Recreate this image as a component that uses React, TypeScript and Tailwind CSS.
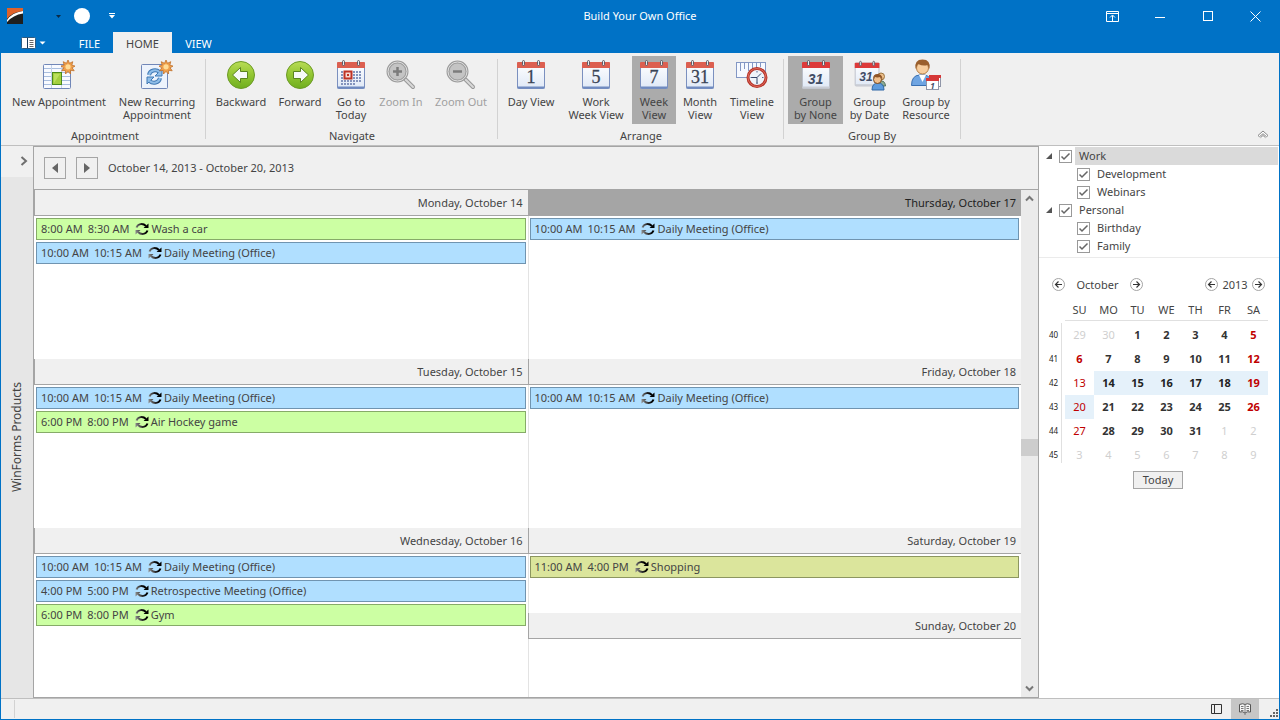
import React, { useState } from 'react';

interface Appointment {
  start: string;
  end: string;
  subject: string;
  color: 'green' | 'blue' | 'olive';
}

interface Day {
  label: string;
  appointments: Appointment[];
}

const dailyMeeting: Appointment = { start: '10:00 AM', end: '10:15 AM', subject: 'Daily Meeting (Office)', color: 'blue' };

const leftDays: Day[] = [
  {
    label: 'Monday, October 14',
    appointments: [{ start: '8:00 AM', end: '8:30 AM', subject: 'Wash a car', color: 'green' }, dailyMeeting],
  },
  {
    label: 'Tuesday, October 15',
    appointments: [dailyMeeting, { start: '6:00 PM', end: '8:00 PM', subject: 'Air Hockey game', color: 'green' }],
  },
  {
    label: 'Wednesday, October 16',
    appointments: [
      dailyMeeting,
      { start: '4:00 PM', end: '5:00 PM', subject: 'Retrospective Meeting (Office)', color: 'blue' },
      { start: '6:00 PM', end: '8:00 PM', subject: 'Gym', color: 'green' },
    ],
  },
];

const thursday: Day = { label: 'Thursday, October 17', appointments: [dailyMeeting] };
const friday: Day = { label: 'Friday, October 18', appointments: [dailyMeeting] };
const saturday: Day = {
  label: 'Saturday, October 19',
  appointments: [{ start: '11:00 AM', end: '4:00 PM', subject: 'Shopping', color: 'olive' }],
};
const sunday: Day = { label: 'Sunday, October 20', appointments: [] };

const colorClasses = {
  green: 'bg-[#ccffa3] border-[#86ab68]',
  blue: 'bg-[#b0dfff] border-[#7094b0]',
  olive: 'bg-[#dbe59c] border-[#8c9660]',
};

const weekDays = ['SU', 'MO', 'TU', 'WE', 'TH', 'FR', 'SA'];

const weeks = [
  { week: 40, days: [29, 30, 1, 2, 3, 4, 5] },
  { week: 41, days: [6, 7, 8, 9, 10, 11, 12] },
  { week: 42, days: [13, 14, 15, 16, 17, 18, 19] },
  { week: 43, days: [20, 21, 22, 23, 24, 25, 26] },
  { week: 44, days: [27, 28, 29, 30, 31, 1, 2] },
  { week: 45, days: [3, 4, 5, 6, 7, 8, 9] },
];

/* ---------- ribbon icons ---------- */

const Star = () => (
  <g transform="translate(0 1)">
    <path
      d="M25 0l1.5 3.3 3.3-1.6-1 3.5 3.2.9-2.9 1.7 2.1 3-3.6-.5-.1 3.7-2.5-2.6-2.5 2.6-.2-3.6-3.5.4 2-3L18 6.1l3.2-.9-1-3.5 3.3 1.6z"
      fill="#f0a04c"
      stroke="#c0702a"
      strokeWidth=".8"
    />
    <circle cx="25" cy="6.8" r="2.6" fill="#ffdc96" />
  </g>
);

const NewAppointmentIcon = () => (
  <svg width="32" height="32" viewBox="0 0 32 32">
    <g transform="translate(-1 0)">
      <rect x="1.5" y="5.5" width="27" height="24" rx="1" fill="#f8faff" stroke="#7187b8" />
      <path d="M2 9.5h26M2 13.5h26M2 17.5h26M2 21.5h26M2 25.5h26" stroke="#a9bede" />
      <path d="M9.5 6v23M19.5 6v23" stroke="#c3d2ea" />
      <rect x="10.5" y="13.5" width="9" height="12" fill="#a3cf3e" stroke="#4c8a1b" />
      <path d="M12 24v-9h6z" fill="#bbe05c" />
    </g>
    <Star />
  </svg>
);

const NewRecurringIcon = () => (
  <svg width="32" height="32" viewBox="0 0 32 32">
    <g transform="translate(-1 0)">
      <rect x="1.5" y="5.5" width="26" height="24" rx="1" fill="#edf3fc" stroke="#7187b8" />
      <g fill="none" stroke="#3f78b4" strokeWidth="4">
        <path d="M9 16c1-5 7-6 10.5-3" />
        <path d="M20 19c-1 5-7 6-10.5 3" />
      </g>
      <path d="M22 10v7h-7zM7 25v-7h7z" fill="#8fbde8" stroke="#3f78b4" />
      <g fill="none" stroke="#8fbde8" strokeWidth="2">
        <path d="M9 16c1-5 7-6 10.5-3" />
        <path d="M20 19c-1 5-7 6-10.5 3" />
      </g>
    </g>
    <Star />
  </svg>
);

const ArrowCircleIcon = ({ back }: { back?: boolean }) => (
  <svg width="32" height="32" viewBox="0 0 32 32">
    <defs>
      <linearGradient id="greenBall" x1="0" y1="0" x2="0" y2="1">
        <stop offset="0" stopColor="#b9dc55" />
        <stop offset=".5" stopColor="#92c632" />
        <stop offset="1" stopColor="#6fae1f" />
      </linearGradient>
    </defs>
    <circle cx="16" cy="16" r="13.5" fill="url(#greenBall)" stroke="#6c9a26" />
    <path
      d={back ? 'M7.5 16l8-7.5v4h7v7h-7v4z' : 'M24.5 16l-8-7.5v4h-7v7h7v4z'}
      fill="#f6faf8"
      stroke="#5a851f"
    />
  </svg>
);

const CalendarBase = ({ bright }: { bright?: boolean }) => (
  <g>
    <defs>
      <linearGradient id="page" x1="0" y1="0" x2="0" y2="1">
        <stop offset="0" stopColor="#ffffff" />
        <stop offset="1" stopColor="#dfe8f6" />
      </linearGradient>
    </defs>
    <rect x="2.5" y="3.5" width="27" height="26" rx="1" fill="url(#page)" stroke={bright ? '#b9bdc6' : '#7b90bf'} />
    <path d="M2 9V4q0-1 1-1h26q1 0 1 1v5z" fill={bright ? '#dd3a3a' : '#dc5f50'} />
    <path d="M2.5 28.5h27" stroke={bright ? '#c9ccd4' : '#6f8ac0'} strokeWidth="2" />
    <g fill="#e9eaed" stroke="#5c5c66">
      <rect x="7.5" y="1.5" width="2" height="5" rx="1" />
      <rect x="22.5" y="1.5" width="2" height="5" rx="1" />
    </g>
  </g>
);

const CalendarIcon = ({ day }: { day: string }) => (
  <svg width="32" height="32" viewBox="0 0 32 32">
    <CalendarBase />
    <text x="16" y="24" textAnchor="middle" fontSize="18" fontFamily="Liberation Serif, serif" fill="#3a4456" stroke="#3a4456" strokeWidth=".3">
      {day}
    </text>
  </svg>
);

const TodayIcon = () => (
  <svg width="32" height="32" viewBox="0 0 32 32">
    <CalendarBase />
    <path
      d="M6 13h20M6 16h20M6 19h20M6 22h20M6 25h14"
      stroke="#8494bd"
      strokeWidth="2"
      strokeDasharray="2 1"
    />
    <rect x="9.5" y="12.5" width="7" height="7" fill="#f7d9d2" stroke="#bf3325" strokeWidth="2" />
    <rect x="12" y="15" width="2" height="2" fill="#bf3325" />
  </svg>
);

const ZoomIcon = ({ plus }: { plus?: boolean }) => (
  <svg width="32" height="32" viewBox="0 0 32 32">
    <path d="M20.5 20.500l7.500 7.500" stroke="#989898" strokeWidth="4" strokeLinecap="round" />
    <path d="M20.5 20.500l7.500 7.500" stroke="#d8d8d8" strokeWidth="2" strokeLinecap="round" />
    <circle cx="12.5" cy="12.5" r="9.5" fill="#c4c4c4" stroke="#9c9c9c" strokeWidth="3" />
    <circle cx="12.5" cy="12.5" r="9.5" fill="none" stroke="#e0e0e0" />
    <path d={plus ? 'M8 12.5h9M12.500 8v9' : 'M8 12.5h9'} stroke="#7c7c7c" strokeWidth="2.5" />
  </svg>
);

const TimelineIcon = () => (
  <svg width="32" height="32" viewBox="0 0 32 32">
    <rect x="0.5" y="3.5" width="29" height="15" fill="#f6f9ff" stroke="#8397c4" />
    <path d="M4.5 4v8M8.5 4v6M12.5 4v8M16.5 4v6M20.5 4v5M24.5 4v4" stroke="#8397c4" />
    <circle cx="21" cy="18.5" r="9" fill="#eef3fa" stroke="#b5342a" strokeWidth="3" />
    <circle cx="21" cy="18.5" r="9" fill="none" stroke="#e06a5c" />
    <path d="M21 12v1.5M21 23.5V25M14.5 18.5H16M26 18.5h1.5" stroke="#51678f" />
    <path d="M15.5 18.5H21v6M21 18.500l4-4" fill="none" stroke="#35466b" />
  </svg>
);

const GroupNoneIcon = () => (
  <svg width="32" height="32" viewBox="0 0 32 32">
    <CalendarBase bright />
    <text x="15.5" y="25" textAnchor="middle" fontSize="14" fontWeight="700" fontStyle="italic" fontFamily="Liberation Sans, sans-serif" fill="#414c66">
      31
    </text>
  </svg>
);

const GroupDateIcon = () => (
  <svg width="32" height="32" viewBox="0 0 32 32">
    <g transform="translate(-1 1) scale(.88)">
      <CalendarBase bright />
    </g>
    <text x="12" y="22" textAnchor="middle" fontSize="12" fontWeight="700" fontStyle="italic" fontFamily="Liberation Sans, sans-serif" fill="#414c66">
      31
    </text>
    <circle cx="27" cy="17.5" r="3.5" fill="#edc08c" stroke="#9a7440" />
    <path d="M24 27q0-5 3.5-5t4 5z" fill="#8dab93" stroke="#54725f" />
    <path d="M18 31q0-7 6-7t6 7z" fill="#5d9bdd" stroke="#2f67a5" />
    <circle cx="23.5" cy="20.5" r="4" fill="#f0bf8c" stroke="#7a4a20" />
    <path d="M19 20q0-5 4.5-5t5 5l-2-2q-4 1-6-.5z" fill="#8f5527" />
  </svg>
);

const GroupResourceIcon = () => (
  <svg width="32" height="32" viewBox="0 0 32 32">
    <path d="M1.5 26.5q0-10 8-10.5h5q7 1 8 10.500z" fill="#6fa5e2" stroke="#3970b2" />
    <path d="M9 16l3.5 7 3.500-7z" fill="#fff" />
    <circle cx="12.5" cy="9" r="6" fill="#f7cd9d" stroke="#b67d42" />
    <path d="M5.5 10Q4 .5 12.500 .5T19.500 10l-2-4q-4 1.500-9.500-1z" fill="#9a5f2c" />
    <rect x="19.5" y="16.5" width="11" height="11" fill="#fff" stroke="#9096a8" />
    <path d="M19 16h12v3H19z" fill="#d63838" />
    <rect x="16.5" y="19.5" width="12" height="11" fill="#fff" stroke="#9096a8" />
    <path d="M16 19h13v3H16z" fill="#d63838" />
    <text x="22.5" y="30" textAnchor="middle" fontSize="8" fontWeight="700" fontStyle="italic" fontFamily="Noto Sans, sans-serif" fill="#414c66">
      1
    </text>
  </svg>
);

/* ---------- small icons ---------- */

const RecurrenceIcon = () => (
  <svg width="14" height="14" viewBox="0 0 14 14" className="shrink-0">
    <defs>
      <linearGradient id="recurrence" gradientUnits="userSpaceOnUse" x1="0" y1="7" x2="9" y2="5">
        <stop offset="0" stopColor="#8d8d8d" />
        <stop offset="1" stopColor="#000000" />
      </linearGradient>
    </defs>
    <path d="M1.5 5.5C3 1.500 8 1 11 4M12.500 8.500C11 12.500 6 13 3 10" fill="none" stroke="url(#recurrence)" strokeWidth="2" />
    <path d="M13.5 1.500V6H8.500zM.5 12.500V8h5z" fill="url(#recurrence)" />
  </svg>
);

const RoundArrow = ({ label, right }: { label: string; right?: boolean }) => (
  <button aria-label={label} className="block h-[13px] w-[13px]">
    <svg width="13" height="13" viewBox="0 0 13 13">
      <circle cx="6.5" cy="6.5" r="6" fill="#fff" stroke="#a3a3a3" />
      <path
        d={right ? 'M3 6.5h6.500M6.500 3.500l3 3-3 3' : 'M10 6.5H3.500M6.500 3.500l-3 3 3 3'}
        fill="none"
        stroke="#333"
        strokeWidth="1.2"
      />
    </svg>
  </button>
);

/* ---------- ribbon ---------- */

interface RibbonButtonProps {
  icon: React.ReactNode;
  lines: string[];
  width: string;
  active?: boolean;
  disabled?: boolean;
}

const RibbonButton: React.FC<RibbonButtonProps> = ({ icon, lines, width, active, disabled }) => (
  <button
    disabled={disabled}
    className={`flex h-[68px] shrink-0 flex-col items-center pt-[3px] ${width} ${active ? 'bg-[#ababab]' : ''} ${
      disabled ? 'text-[#a0a0a0]' : 'hover:bg-[#d5d5d5]'
    }`}
  >
    {icon}
    <span className="mt-1 block leading-[13px] whitespace-nowrap">
      {lines.map((line) => (
        <span key={line} className="block">
          {line}
        </span>
      ))}
    </span>
  </button>
);

const RibbonGroup: React.FC<{ caption: string; padding: string; children: React.ReactNode }> = ({ caption, padding, children }) => (
  <div className="flex shrink-0">
    <div className={padding}>
      <div className="flex pt-[3px]">{children}</div>
      <div className="pt-1 text-center leading-4">{caption}</div>
    </div>
    <div className="mt-[6px] h-20 w-px bg-[#d2d2d2]" />
  </div>
);

const Ribbon = () => (
  <div className="flex h-[93px] shrink-0 border-b border-[#bfbfbf] bg-[#f0f0f0]">
    <RibbonGroup caption="Appointment" padding="pl-[6px] pr-[2px]">
      <RibbonButton icon={<NewAppointmentIcon />} lines={['New Appointment']} width="w-[104px]" />
      <RibbonButton icon={<NewRecurringIcon />} lines={['New Recurring', 'Appointment']} width="w-[92px]" />
    </RibbonGroup>
    <RibbonGroup caption="Navigate" padding="pl-1 pr-[3px]">
      <RibbonButton icon={<ArrowCircleIcon back />} lines={['Backward']} width="w-[62px]" />
      <RibbonButton icon={<ArrowCircleIcon />} lines={['Forward']} width="w-[56px]" />
      <RibbonButton icon={<TodayIcon />} lines={['Go to', 'Today']} width="w-[46px]" />
      <RibbonButton icon={<ZoomIcon plus />} lines={['Zoom In']} width="w-[54px]" disabled />
      <RibbonButton icon={<ZoomIcon />} lines={['Zoom Out']} width="w-[66px]" disabled />
    </RibbonGroup>
    <RibbonGroup caption="Arrange" padding="pl-1 pr-[3px]">
      <RibbonButton icon={<CalendarIcon day="1" />} lines={['Day View']} width="w-[58px]" />
      <RibbonButton icon={<CalendarIcon day="5" />} lines={['Work', 'Week View']} width="w-[72px]" />
      <RibbonButton icon={<CalendarIcon day="7" />} lines={['Week', 'View']} width="w-[44px]" active />
      <RibbonButton icon={<CalendarIcon day="31" />} lines={['Month', 'View']} width="w-[48px]" />
      <RibbonButton icon={<TimelineIcon />} lines={['Timeline', 'View']} width="w-[56px]" />
    </RibbonGroup>
    <RibbonGroup caption="Group By" padding="px-1">
      <RibbonButton icon={<GroupNoneIcon />} lines={['Group', 'by None']} width="w-[55px]" active />
      <RibbonButton icon={<GroupDateIcon />} lines={['Group', 'by Date']} width="w-[53px]" />
      <RibbonButton icon={<GroupResourceIcon />} lines={['Group by', 'Resource']} width="w-[60px]" />
    </RibbonGroup>
    <button aria-label="Collapse ribbon" className="mr-[10px] mb-[6px] ml-auto self-end">
      <svg width="12" height="9" viewBox="0 0 12 9">
        <path d="M1 5.5l5-4.500 5 4.500-1.500 1.200L6 3.700 2.500 6.700zM3.500 7.700L6 5.500l2.500 2.200" fill="#fff" stroke="#888" />
      </svg>
    </button>
  </div>
);

/* ---------- title bar and tabs ---------- */

const TitleBar = () => (
  <header className="grid h-8 shrink-0 grid-cols-[1fr_auto_1fr] items-center text-white">
    <div className="flex items-center pl-[6px]">
      <svg width="16" height="16" viewBox="0 0 16 16">
        <rect width="16" height="16" fill="#1f1f1f" />
        <path d="M0 0h16v3Q5 4 0 11z" fill="#e0622a" />
        <path d="M0 12Q5 4.5 16 3v2.500Q6 7 0 14z" fill="#fff" />
      </svg>
      <button aria-label="Undo history" className="ml-[33px]">
        <svg width="5" height="3" viewBox="0 0 5 3">
          <path d="M0 0h5L2.5 3z" fill="#0b2a45" />
        </svg>
      </button>
      <button aria-label="Touch mode" className="ml-[13px] h-4 w-4 rounded-full bg-white" />
      <button aria-label="Customize quick access toolbar" className="ml-[19px]">
        <svg width="6" height="6" viewBox="0 0 6 6">
          <path d="M0 0h6v1H0zM0 2h6L3 5.500z" fill="#fff" />
        </svg>
      </button>
    </div>
    <h1>Build Your Own Office</h1>
    <div className="flex justify-end">
      <button aria-label="Ribbon display options" className="flex h-8 w-12 items-center justify-center">
        <svg width="13" height="11" viewBox="0 0 13 11" fill="none" stroke="#fff">
          <path d="M.5 .5h12v10H.5zM0 2.500h13M6.500 10V4.500M4 6.500L6.500 4 9 6.500" />
        </svg>
      </button>
      <button aria-label="Minimize" className="flex h-8 w-12 items-center justify-center">
        <span className="mt-[2px] h-px w-[10px] bg-white" />
      </button>
      <button aria-label="Maximize" className="flex h-8 w-12 items-center justify-center">
        <span className="h-[10px] w-[10px] border border-white" />
      </button>
      <button aria-label="Close" className="flex h-8 w-[47px] items-center justify-center">
        <svg width="11" height="11" viewBox="0 0 11 11" stroke="#fff">
          <path d="M.5 .5l10 10M10.500 .5l-10 10" />
        </svg>
      </button>
    </div>
  </header>
);

const TabStrip = () => (
  <nav className="flex h-[21px] shrink-0 text-white">
    <button aria-label="Application menu" className="mr-5 flex items-center gap-[3px] pl-5">
      <svg width="15" height="12" viewBox="0 0 15 12">
        <rect x=".5" y=".5" width="14" height="11" rx="1" fill="#fff" stroke="#2c5a80" />
        <path d="M6.5 1v10" stroke="#143a5c" />
        <path d="M8.5 3.500h4M8.500 5.500h4M8.500 7.500h4M8.500 9.500h4" stroke="#666" />
      </svg>
      <svg width="7" height="4" viewBox="0 0 7 4">
        <path d="M.5 .5h6L3.500 3.500z" fill="#fff" />
      </svg>
    </button>
    <button className="w-[47px] pt-[3px]">FILE</button>
    <button className="w-[59px] bg-[#f0f0f0] pt-[3px] text-[#444]">HOME</button>
    <button className="w-[53px] pt-[3px]">VIEW</button>
  </nav>
);

/* ---------- scheduler ---------- */

const AppointmentRow: React.FC<{ item: Appointment }> = ({ item }) => (
  <button className={`flex h-[22px] w-full items-center border pl-1 whitespace-nowrap ${colorClasses[item.color]}`}>
    <span>{item.start}</span>
    <span className="ml-[5px]">{item.end}</span>
    <span className="mr-[2px] ml-[6px]">
      <RecurrenceIcon />
    </span>
    <span>{item.subject}</span>
  </button>
);

const DayCell: React.FC<{ day: Day; current?: boolean; divider?: boolean }> = ({ day, current, divider }) => (
  <section className="flex min-h-0 flex-1 flex-col">
    <h2
      className={`h-[26px] shrink-0 border-b border-l border-[#a5a5a5] pr-[5px] text-right leading-[25px] ${
        current ? 'bg-[#a5a5a5] text-[#222]' : 'bg-[#f0f0f0]'
      }`}
    >
      {day.label}
    </h2>
    <div
      className={`flex flex-1 flex-col gap-[2px] border-l bg-white pt-[2px] pr-[2px] pl-px ${
        divider ? 'border-[#e3e3e3]' : 'border-white'
      }`}
    >
      {day.appointments.map((item, i) => (
        <AppointmentRow key={i} item={item} />
      ))}
    </div>
  </section>
);

const Scheduler = () => (
  <main className="flex min-w-0 flex-1 flex-col border border-[#a5a5a5]">
    <div className="flex h-[43px] shrink-0 items-center gap-[10px] border-b border-[#a5a5a5] pl-[10px]">
      <button aria-label="Previous week" className="flex h-[22px] w-[22px] items-center justify-center border border-[#a5a5a5]">
        <svg width="6" height="10" viewBox="0 0 6 10">
          <path d="M6 0v10L0 5z" fill="#666" />
        </svg>
      </button>
      <button aria-label="Next week" className="flex h-[22px] w-[22px] items-center justify-center border border-[#a5a5a5]">
        <svg width="6" height="10" viewBox="0 0 6 10">
          <path d="M0 0v10l6-5z" fill="#666" />
        </svg>
      </button>
      <span>October 14, 2013 - October 20, 2013</span>
    </div>
    <div className="flex flex-1">
      <div className="grid min-w-0 flex-1 grid-cols-2">
        <div className="flex flex-col">
          {leftDays.map((day) => (
            <DayCell key={day.label} day={day} />
          ))}
        </div>
        <div className="grid grid-rows-3">
          <DayCell day={thursday} current divider />
          <DayCell day={friday} divider />
          <div className="flex flex-col">
            <DayCell day={saturday} divider />
            <DayCell day={sunday} divider />
          </div>
        </div>
      </div>
      <div className="flex w-[17px] shrink-0 flex-col items-center justify-between bg-[#ebebeb]">
        <button aria-label="Scroll up" className="flex h-[17px] w-full items-center justify-center">
          <svg width="9" height="7" viewBox="0 0 9 7">
            <path d="M1 5.5L4.500 2 8 5.500" fill="none" stroke="#777" strokeWidth="2" />
          </svg>
        </button>
        <div className="mt-2 h-[17px] w-full bg-[#cdcdcd]" />
        <button aria-label="Scroll down" className="flex h-[17px] w-full items-center justify-center">
          <svg width="9" height="7" viewBox="0 0 9 7">
            <path d="M1 1.5L4.500 5 8 1.500" fill="none" stroke="#777" strokeWidth="2" />
          </svg>
        </button>
      </div>
    </div>
  </main>
);

/* ---------- right panel ---------- */

const CheckItem: React.FC<{ label: string; parent?: boolean; selected?: boolean }> = ({ label, parent, selected }) => {
  const [checked, setChecked] = useState(true);

  return (
    <li className={`flex h-[18px] items-center ${parent ? 'pl-[7px]' : 'pl-[38px]'}`}>
      {parent && (
        <button aria-label={`Collapse ${label}`} className="mr-[7px]">
          <svg width="6" height="6" viewBox="0 0 6 6">
            <path d="M6 0v6H0z" fill="#555" />
          </svg>
        </button>
      )}
      <label className="flex h-full flex-1 items-center">
        <span className="relative h-[13px] w-[13px] shrink-0">
          <input
            type="checkbox"
            checked={checked}
            onChange={(e) => setChecked(e.target.checked)}
            className="block h-[13px] w-[13px] appearance-none border border-[#999] bg-white"
          />
          {checked && (
            <svg width="13" height="13" viewBox="0 0 13 13" className="pointer-events-none absolute inset-0">
              <path d="M2.5 6.500L5 9l5.500-5.500" fill="none" stroke="#666" strokeWidth="1.5" />
            </svg>
          )}
        </span>
        <span className={`ml-[3px] h-full flex-1 pl-1 leading-[18px] ${selected ? 'bg-[#dadada]' : ''}`}>{label}</span>
      </label>
    </li>
  );
};

const dayClass = (day: number, row: number, col: number) => {
  const otherMonth = (row === 0 && day > 20) || (row > 3 && day < 15);
  if (otherMonth) return 'text-[#cfcfcf]';
  if (day === 20) return 'bg-[#e5f1fa] text-[#c00000]';
  if (day >= 14 && day <= 18) return 'bg-[#e5f1fa] font-bold text-[#222]';
  if (day === 19) return 'bg-[#e5f1fa] font-bold text-[#c00000]';
  if (day === 13 || day === 27) return 'text-[#c00000]';
  if (col === 0 || col === 6) return 'font-bold text-[#c00000]';
  return 'font-bold text-[#333]';
};

const DateNavigator = () => (
  <div className="pt-[17px]">
    <div className="flex h-[19px] items-center justify-between pr-[14px] pl-[13px]">
      <div className="flex w-[91px] items-center justify-between">
        <RoundArrow label="Previous month" />
        <span>October</span>
        <RoundArrow label="Next month" right />
      </div>
      <div className="flex w-[60px] items-center justify-between">
        <RoundArrow label="Previous year" />
        <span>2013</span>
        <RoundArrow label="Next year" right />
      </div>
    </div>
    <table className="mt-[6px] ml-[9px] table-fixed border-separate border-spacing-0 text-center">
      <thead>
        <tr>
          <th className="w-[17px] p-0" />
          {weekDays.map((name) => (
            <th key={name} className="w-[29px] p-0 pb-[2px] font-normal">
              <div className="h-[21px] border-b border-[#e0e0e0] leading-5">{name}</div>
            </th>
          ))}
        </tr>
      </thead>
      <tbody>
        {weeks.map((row, r) => (
          <tr key={row.week}>
            <th scope="row" className="w-[17px] p-0 align-top text-[8px] font-normal text-[#222]">
              <div className={`w-[14px] border-r border-[#e0e0e0] pr-[2px] leading-6 ${r === 5 ? 'h-5' : 'h-6'}`}>{row.week}</div>
            </th>
            {row.days.map((day, c) => (
              <td key={c} className={`h-6 w-[29px] p-0 ${dayClass(day, r, c)}`}>
                {day}
              </td>
            ))}
          </tr>
        ))}
      </tbody>
    </table>
    <div className="mt-1 flex justify-center pr-[2px]">
      <button className="h-[18px] w-[50px] border border-[#a5a5a5] bg-[#f0f0f0] leading-4">Today</button>
    </div>
  </div>
);

const StatusBar = () => (
  <footer className="flex h-[21px] shrink-0 border-t border-[#bfbfbf] bg-[#f0f0f0]">
    <div className="my-px ml-[13px] w-px bg-[#d2d2d2]" />
    <div className="ml-auto flex">
      <button aria-label="Normal view" className="flex w-7 items-center justify-center pr-px">
        <svg width="11" height="10" viewBox="0 0 11 10">
          <path d="M.5 .5h10v9H.5zM3.500 0v10" fill="none" stroke="#333" />
        </svg>
      </button>
      <button aria-label="Reading view" className="flex w-7 items-center justify-center bg-[#c6c6c6] pb-px">
        <svg width="12" height="12" viewBox="0 0 12 12">
          <path d="M.5 1.5Q4 0 6 1.500 8 0 11.500 1.500v7.500Q8 8 6 10 4 8 .5 9z" fill="#f5f5f5" stroke="#555" />
          <path d="M6 1.5V12M2 3.500h2.500M2 5.500h2.500M2 7.500h2.500M7.500 3.500H10M7.500 5.500H10M7.500 7.500H10" stroke="#777" />
        </svg>
      </button>
      <svg width="8" height="8" viewBox="0 0 8 8" className="mr-px mb-[2px] ml-[11px] self-end" fill="#666">
        <path d="M6 0h2v2H6zM3 3h2v2H3zM6 3h2v2H6zM0 6h2v2H0zM3 6h2v2H3zM6 6h2v2H6z" />
      </svg>
    </div>
  </footer>
);

const App: React.FC = () => {
  return (
    <div className="flex min-h-screen flex-col border-x border-b border-[#0072c6] bg-[#0072c6] font-['Noto_Sans',sans-serif] text-[11px] leading-4 text-[#444]">
      <TitleBar />
      <TabStrip />
      <Ribbon />
      <div className="flex flex-1 bg-[#f0f0f0]">
        <aside className="flex w-8 shrink-0 flex-col bg-[#e6e6e6]">
          <button aria-label="Expand navigation" className="flex h-[31px] items-center justify-end bg-[#f0f0f0] pr-[5px] pb-[2px]">
            <svg width="8" height="10" viewBox="0 0 8 10">
              <path d="M1.5 1L6 5 1.500 9" fill="none" stroke="#6f6f6f" strokeWidth="2" />
            </svg>
          </button>
          <button className="flex flex-1 items-center justify-center">
            <span className="rotate-180 text-[12px] [writing-mode:vertical-rl]">WinForms Products</span>
          </button>
        </aside>
        <Scheduler />
        <aside className="w-60 shrink-0 bg-white">
          <ul className="border-b border-[#ebebeb] pt-px pr-px pb-[2px]">
            <CheckItem label="Work" parent selected />
            <CheckItem label="Development" />
            <CheckItem label="Webinars" />
            <CheckItem label="Personal" parent />
            <CheckItem label="Birthday" />
            <CheckItem label="Family" />
          </ul>
          <DateNavigator />
        </aside>
      </div>
      <StatusBar />
    </div>
  );
};

export default App;
